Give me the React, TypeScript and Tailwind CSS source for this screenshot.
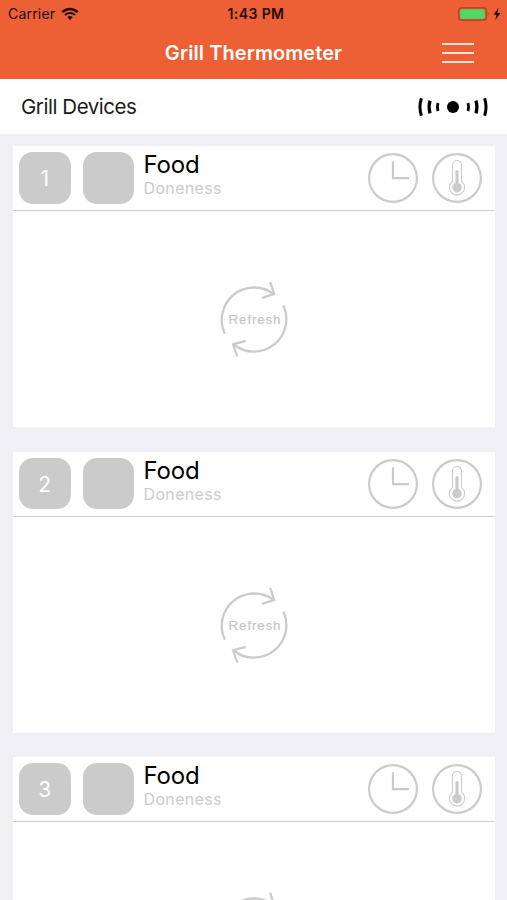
import React from 'react';

interface DeviceCardProps {
    channel: number;
}

const WifiIcon: React.FC = () => (
    <svg className="w-[18px] h-[14px]" viewBox="0 0 18 14" fill="none" stroke="#1c0d08">
        <path d="M1.3 5.1 A11 11 0 0 1 16.7 5.1" strokeWidth="2.5" />
        <path d="M4 8 A7.2 7.2 0 0 1 14 8" strokeWidth="2.2" />
        <path d="M9 13 L6.3 10.3 A3.9 3.9 0 0 1 11.7 10.3 Z" fill="#1c0d08" stroke="none" />
    </svg>
);

const BatteryIcon: React.FC = () => (
    <svg className="w-[44px] h-[14px]" viewBox="0 0 44 14" fill="none">
        <rect x="0.8" y="0.8" width="27.4" height="12.4" rx="2.6" stroke="#a8401f" strokeWidth="1.2" />
        <rect x="2.2" y="2.2" width="24.6" height="9.6" rx="1.3" fill="#4cd964" />
        <path d="M29.8 4.8 Q31.6 7 29.8 9.2 Z" fill="#a8401f" />
        <path d="M40.5 1 L35.4 7.8 H38.6 L37.2 13 L42.6 6 H39.3 Z" fill="#1c0d08" />
    </svg>
);

const SignalIcon: React.FC = () => (
    <svg className="w-[72px] h-[20px]" viewBox="0 0 72 20" fill="none" stroke="#000">
        <circle cx="36" cy="10" r="6" fill="#000" stroke="none" />
        <path d="M4.4 1.3 Q1.5 10 4.4 18.7" strokeWidth="3" />
        <path d="M13 3.6 Q11.2 10 13 16.4" strokeWidth="3.2" />
        <path d="M21 6 Q19.8 10 21 14" strokeWidth="2.8" />
        <path d="M51 6 Q52.2 10 51 14" strokeWidth="2.8" />
        <path d="M59 3.6 Q60.8 10 59 16.4" strokeWidth="3.2" />
        <path d="M67.6 1.3 Q70.5 10 67.6 18.7" strokeWidth="3" />
    </svg>
);

const ClockIcon: React.FC = () => (
    <svg className="w-[50px] h-[50px]" viewBox="0 0 50 50" fill="none" stroke="#cbcbcb" strokeWidth="2.2">
        <circle cx="25" cy="25" r="23.9" />
        <path d="M25 8.3 V25.2 H41" />
    </svg>
);

const ThermometerIcon: React.FC = () => (
    <svg className="w-[50px] h-[50px]" viewBox="0 0 50 50" fill="none" stroke="#cbcbcb">
        <circle cx="25" cy="25" r="23.9" strokeWidth="2.2" />
        <path d="M20.5 12 A4.5 4.5 0 0 1 29.5 12 V28.4 A7.6 7.6 0 1 1 20.5 28.4 Z" strokeWidth="1.1" />
        <path d="M25 18.5 V33" strokeWidth="3.2" strokeLinecap="round" />
        <circle cx="25" cy="34.6" r="4.8" fill="#cbcbcb" stroke="none" />
    </svg>
);

const RefreshButton: React.FC = () => (
    <button className="relative w-[100px] h-[100px] flex items-center justify-center">
        <svg className="absolute inset-0" viewBox="0 0 100 100" fill="none" stroke="#cbcbcb" strokeWidth="2.3">
            <path d="M19.8 63.8 A32.5 32.5 0 0 1 68.2 23.6" />
            <path d="M65.2 11.8 L69.2 23.9 L56.8 28" />
            <path d="M78.4 35.5 A32.5 32.5 0 0 1 28.6 74.5" />
            <path d="M40.6 70.8 L28 74.3 L32.2 86.5" />
        </svg>
        <span className="text-[13.5px] leading-none tracking-[0.8px] text-[#c6c6c6] [-webkit-text-stroke:0.2px_#c6c6c6] font-['Liberation_Sans',sans-serif]">Refresh</span>
    </button>
);

const DeviceCard: React.FC<DeviceCardProps> = ({ channel }) => (
    <section className="h-[281px] shrink-0 flex flex-col bg-white">
        <div className="h-[65px] shrink-0 flex items-start border-b-[1.5px] border-[#d0d0d0] pt-1.5 pl-1.5 pr-[13px]">
            <div className="w-[51.5px] h-[51.5px] rounded-[14px] bg-[#cbcbcb] text-white text-[21px] pt-0.5 flex items-center justify-center">{channel}</div>
            <div className="w-[51.5px] h-[51.5px] rounded-[14px] bg-[#cbcbcb] ml-3" />
            <div className="ml-[9.5px] pt-px flex flex-col">
                <span className="text-[24px] leading-6 tracking-[-0.2px] text-black">Food</span>
                <span className="-mt-px text-[16px] leading-6 tracking-[0.35px] text-[#cbcbcb]">Doneness</span>
            </div>
            <div className="ml-auto mt-px flex gap-[14px]">
                <ClockIcon />
                <ThermometerIcon />
            </div>
        </div>
        <div className="flex-1 flex items-center justify-center pl-0.5 pt-0.5">
            <RefreshButton />
        </div>
    </section>
);

const App: React.FC = () => {
    return (
        <div className="w-full h-[900px] overflow-hidden flex flex-col bg-[#efeff4] font-[Inter,sans-serif]">
            <header className="h-[79px] shrink-0 bg-[#ed5f35] flex flex-col">
                {/* Status bar */}
                <div className="h-[27px] grid grid-cols-3 items-center pl-2 pr-[5px] text-[#1c0d08]">
                    <div className="flex items-center gap-1.5">
                        <span className="text-[14px] tracking-[0.2px]">Carrier</span>
                        <WifiIcon />
                    </div>
                    <span className="text-center text-[14px] tracking-[0.4px] pl-0.5 font-semibold">1:43 PM</span>
                    <div className="flex justify-end">
                        <BatteryIcon />
                    </div>
                </div>
                {/* Title bar */}
                <div className="h-[52px] grid grid-cols-[1fr_auto_1fr] items-center pr-[33px] pl-[33px]">
                    <h1 className="col-start-2 text-[20px] tracking-[0.08px] font-semibold text-white">Grill Thermometer</h1>
                    <button className="justify-self-end w-8 flex flex-col gap-[7px]">
                        <span className="h-[2px] bg-[#ffe3d8]" />
                        <span className="h-[2px] bg-[#ffe3d8]" />
                        <span className="h-[2px] bg-[#ffe3d8]" />
                    </button>
                </div>
            </header>

            <div className="h-[55px] shrink-0 bg-white flex items-center justify-between pl-[21px] pr-[18px]">
                <h2 className="pt-0.5 text-[20.5px] tracking-[-0.45px] text-[#1a1a1a]">Grill Devices</h2>
                <SignalIcon />
            </div>

            <main className="flex flex-col gap-[24.5px] pt-3 pl-[13px] pr-3">
                <DeviceCard channel={1} />
                <DeviceCard channel={2} />
                <DeviceCard channel={3} />
            </main>
        </div>
    );
};

export default App;
